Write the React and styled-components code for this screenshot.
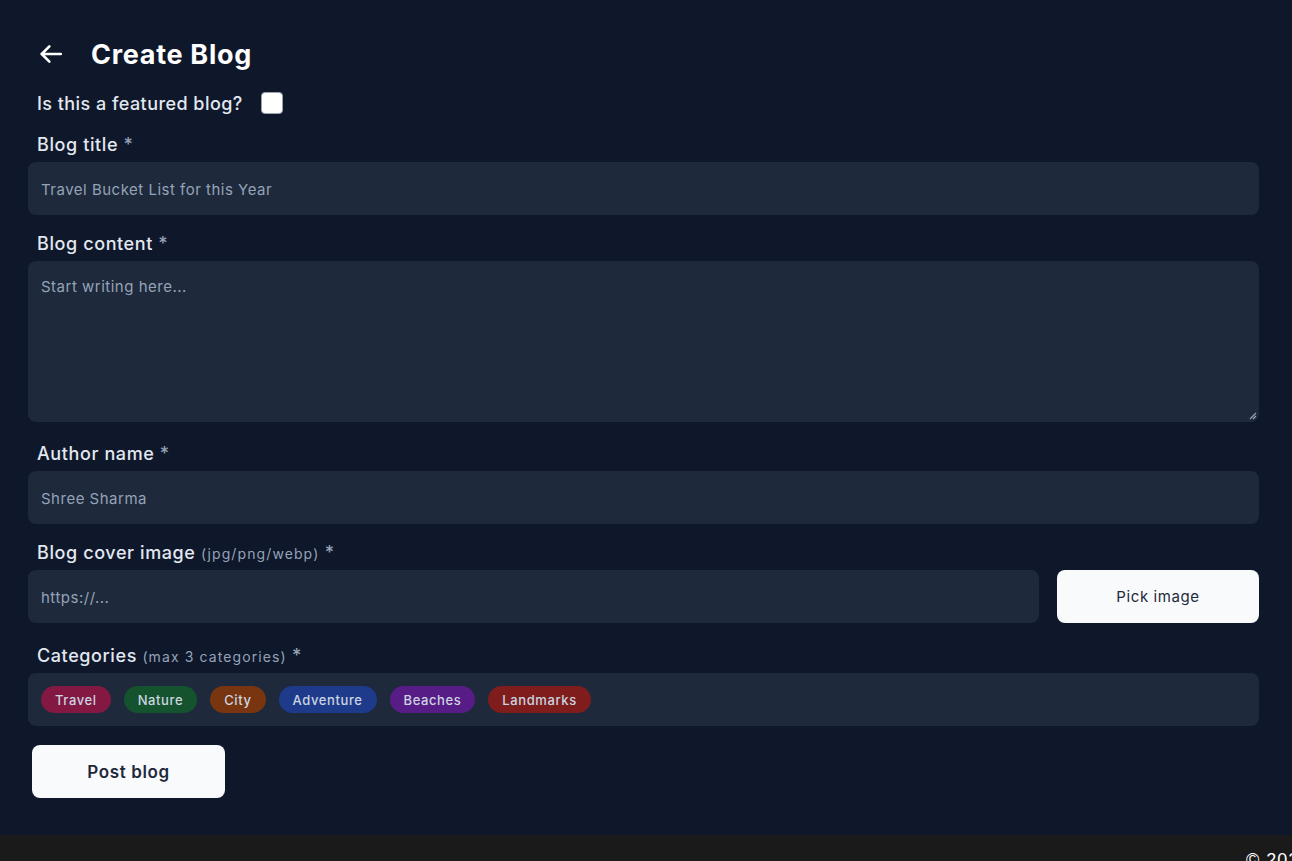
import React from "react";
import styled, { createGlobalStyle } from "styled-components";

const Global = createGlobalStyle`
  html, body { margin: 0; padding: 0; background: #0f172a; }
  body { font-family: Inter, "Open Sans", sans-serif; color: #e2e8f0; overflow: hidden; }
  * { box-sizing: border-box; }
`;

const Page = styled.div`
  display: flex;
  flex-direction: column;
  min-height: 861px;
`;

const Main = styled.main`
  flex: 1;
  padding: 36px 33px 37px 28px;
  display: flex;
  flex-direction: column;
`;

const Header = styled.div`
  display: flex;
  align-items: center;
  gap: 27px;
  padding-left: 10px;
  height: 36px;
`;

const BackButton = styled.button`
  background: none;
  border: none;
  padding: 0;
  display: flex;
  color: #ffffff;
  cursor: pointer;
`;

const Title = styled.h1`
  margin: 0;
  font-size: 27px;
  font-weight: 700;
  color: #ffffff;
  letter-spacing: 0.7px;
`;

const FeaturedRow = styled.label`
  display: flex;
  align-items: center;
  gap: 18px;
  height: 24px;
  padding-left: 9px;
  margin-top: 19px;
  font-size: 18px;
  font-weight: 500;
  letter-spacing: 0.45px;
  color: #e2e8f0;
`;

const Checkbox = styled.span`
  width: 22px;
  height: 22px;
  border-radius: 4px;
  background: #ffffff;
  border: 1px solid #9ca3af;
`;

const Label = styled.div`
  padding-left: 9px;
  margin-top: ${(p) => p.$mt}px;
  margin-bottom: 5px;
  height: 24px;
  line-height: 24px;
  font-size: 18px;
  font-weight: 500;
  letter-spacing: 0.6px;
  color: #e2e8f0;
  white-space: nowrap;
`;

const Hint = styled.span`
  font-size: 14px;
  font-weight: 400;
  letter-spacing: 1.1px;
  color: #94a3b8;
`;

const Star = styled.span`
  color: #94a3b8;
`;

const Field = styled.div`
  height: ${(p) => p.$h || 53}px;
  flex: ${(p) => (p.$grow ? 1 : "none")};
  background: #1e293b;
  border-radius: 8px;
  padding: ${(p) => (p.$area ? "16px 13px" : "2px 13px 0")};
  display: flex;
  align-items: ${(p) => (p.$area ? "flex-start" : "center")};
  font-size: 15px;
  letter-spacing: 0.5px;
  color: #94a3b8;
  position: relative;
`;

const Grip = styled.svg`
  position: absolute;
  right: 2px;
  bottom: 2px;
`;

const Row = styled.div`
  display: flex;
  gap: 18px;
`;

const WhiteButton = styled.button`
  height: 53px;
  width: ${(p) => p.$w}px;
  background: #f8fafc;
  color: #1e293b;
  border: none;
  border-radius: 8px;
  font-family: inherit;
  font-size: ${(p) => (p.$bold ? 17 : 15)}px;
  font-weight: ${(p) => (p.$bold ? 600 : 400)};
  letter-spacing: 0.6px;
  cursor: pointer;
  margin-left: ${(p) => p.$ml || 0}px;
`;

const Chips = styled.div`
  height: 53px;
  background: #1e293b;
  border-radius: 8px;
  display: flex;
  align-items: center;
  gap: 13px;
  padding: 0 13px;
`;

const Chip = styled.span`
  height: 27px;
  padding: 0 14px;
  border-radius: 14px;
  display: flex;
  align-items: center;
  background: ${(p) => p.$bg};
  color: #cbd5e1;
  font-size: 13px;
  font-weight: 500;
  letter-spacing: 0.6px;
`;

const Actions = styled.div`
  margin-top: 19px;
`;

const Footer = styled.footer`
  height: 26px;
  background: #1a1a1a;
  color: #ffffff;
  font-family: "Liberation Sans", Arial, sans-serif;
  font-size: 18px;
  letter-spacing: 1px;
  white-space: nowrap;
  overflow: hidden;
  padding: 15px 0 0 1246px;
`;

const categories = [
  ["Travel", "#831843"],
  ["Nature", "#14532d"],
  ["City", "#78350f"],
  ["Adventure", "#1e3a8a"],
  ["Beaches", "#581c87"],
  ["Landmarks", "#7f1d1d"],
];

export default function App() {
  return (
    <Page>
      <Global />
      <Main>
        <Header>
          <BackButton aria-label="Back">
            <svg width="26" height="26" viewBox="0 0 24 24" fill="none" stroke="currentColor" strokeWidth="2.4" strokeLinecap="round" strokeLinejoin="round">
              <path d="M21 12H3.5" />
              <path d="M10.5 5l-7 7 7 7" />
            </svg>
          </BackButton>
          <Title>Create Blog</Title>
        </Header>
        <FeaturedRow>
          Is this a featured blog?
          <Checkbox />
        </FeaturedRow>
        <Label $mt={18}>
          Blog title <Star>*</Star>
        </Label>
        <Field>Travel Bucket List for this Year</Field>
        <Label $mt={17}>
          Blog content <Star>*</Star>
        </Label>
        <Field $area $h={161}>
          Start writing here...
          <Grip width="8" height="8" viewBox="0 0 8 8">
            <path d="M7 1L1 7M7 4L4 7" stroke="#94a3b8" strokeWidth="1.2" />
          </Grip>
        </Field>
        <Label $mt={20}>
          Author name <Star>*</Star>
        </Label>
        <Field>Shree Sharma</Field>
        <Label $mt={17}>
          Blog cover image <Hint>(jpg/png/webp)</Hint> <Star>*</Star>
        </Label>
        <Row>
          <Field $grow>https://...</Field>
          <WhiteButton $w={202}>Pick image</WhiteButton>
        </Row>
        <Label $mt={21}>
          Categories <Hint>(max 3 categories)</Hint> <Star>*</Star>
        </Label>
        <Chips>
          {categories.map(([name, bg]) => (
            <Chip key={name} $bg={bg}>
              {name}
            </Chip>
          ))}
        </Chips>
        <Actions>
          <WhiteButton $w={193} $bold $ml={4}>
            Post blog
          </WhiteButton>
        </Actions>
      </Main>
      <Footer>© 2024 Blog. All rights reserved.</Footer>
    </Page>
  );
}
